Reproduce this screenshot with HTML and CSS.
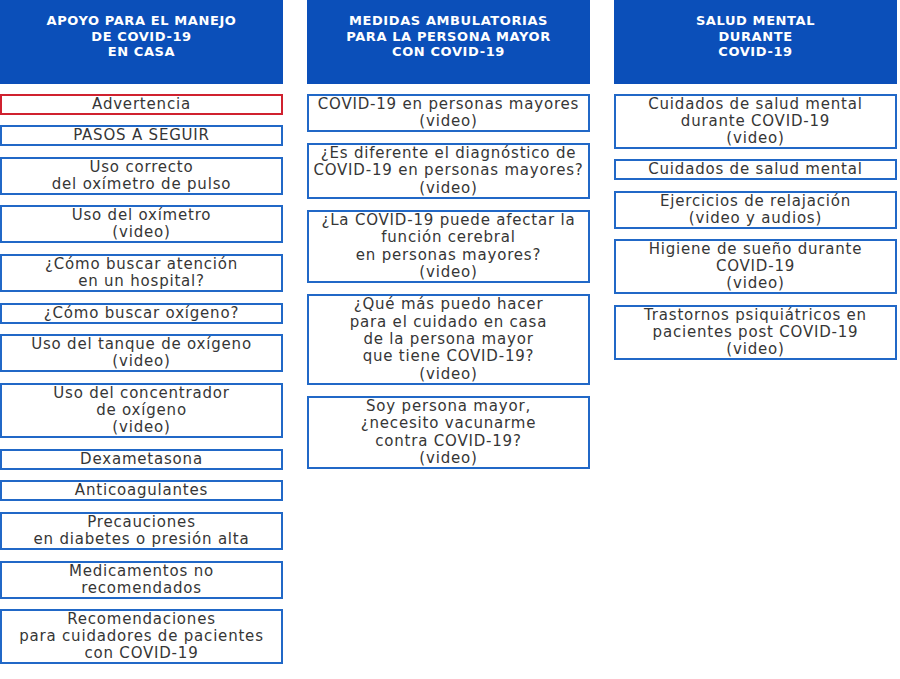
FILE: index.html
```html
<!doctype html>
<html lang="es">
	<head>
		<meta charset="UTF-8">
		<title>COVID-19 en casa</title>
		<link rel="stylesheet" href="styles.css">
	</head>
	<body>
		<div class="menu">
			<div class="col">
				<div class="head">APOYO PARA EL MANEJO<br>DE COVID-19<br>EN CASA</div>
				<a class="item warn" href="#">Advertencia</a>
				<a class="item" href="#">PASOS A SEGUIR</a>
				<a class="item" href="#">Uso correcto<br>del oxímetro de pulso</a>
				<a class="item" href="#">Uso del oxímetro<br>(video)</a>
				<a class="item" href="#">¿Cómo buscar atención<br>en un hospital?</a>
				<a class="item" href="#">¿Cómo buscar oxígeno?</a>
				<a class="item" href="#">Uso del tanque de oxígeno<br>(video)</a>
				<a class="item" href="#">Uso del concentrador<br>de oxígeno<br>(video)</a>
				<a class="item" href="#">Dexametasona</a>
				<a class="item" href="#">Anticoagulantes</a>
				<a class="item" href="#">Precauciones<br>en diabetes o presión alta</a>
				<a class="item" href="#">Medicamentos no<br>recomendados</a>
				<a class="item" href="#">Recomendaciones<br>para cuidadores de pacientes<br>con COVID-19</a>
			</div>
			<div class="col mayores">
				<div class="head">MEDIDAS AMBULATORIAS<br>PARA LA PERSONA MAYOR<br>CON COVID-19</div>
				<a class="item" href="#">COVID-19 en personas mayores<br>(video)</a>
				<a class="item" href="#">¿Es diferente el diagnóstico de<br>COVID-19 en personas mayores?<br>(video)</a>
				<a class="item" href="#">¿La COVID-19 puede afectar la<br>función cerebral<br>en personas mayores?<br>(video)</a>
				<a class="item" href="#">¿Qué más puedo hacer<br>para el cuidado en casa<br>de la persona mayor<br>que tiene COVID-19?<br>(video)</a>
				<a class="item" href="#">Soy persona mayor,<br>¿necesito vacunarme<br>contra COVID-19?<br>(video)</a>
			</div>
			<div class="col">
				<div class="head">SALUD MENTAL<br>DURANTE<br>COVID-19</div>
				<a class="item" href="#">Cuidados de salud mental<br>durante COVID-19<br>(video)</a>
				<a class="item" href="#">Cuidados de salud mental</a>
				<a class="item" href="#">Ejercicios de relajación<br>(video y audios)</a>
				<a class="item" href="#">Higiene de sueño durante<br>COVID-19<br>(video)</a>
				<a class="item" href="#">Trastornos psiquiátricos en<br>pacientes post COVID-19<br>(video)</a>
			</div>
		</div>
	</body>
</html>
```

FILE: styles.css
```css
* {
	font-family: "DejaVu Sans", "Open Sans", sans-serif;
}
body {
	margin: 0;
	background-color: white;
}
.menu {
	display: grid;
	grid-template-columns: repeat(3, 283px);
	column-gap: 24px;
	align-items: start;
}
.col {
	display: flex;
	flex-direction: column;
}
.head {
	height: 84px;
	box-sizing: border-box;
	padding-top: 13px;
	background-color: #0b4fb9;
	color: white;
	font-size: 13px;
	font-weight: 700;
	letter-spacing: 0.6px;
	line-height: 15.5px;
	text-align: center;
}
.item {
	display: block;
	margin-top: 10.67px;
	border: 2px solid #2168c7;
	color: #363636;
	font-size: 15px;
	letter-spacing: 0.8px;
	line-height: 17px;
	text-align: center;
	text-decoration: none;
}
.head + .item {
	margin-top: 9.5px;
}
.mayores .item {
	line-height: 17.4px;
}
.warn {
	border-color: #d0212f;
}
```
